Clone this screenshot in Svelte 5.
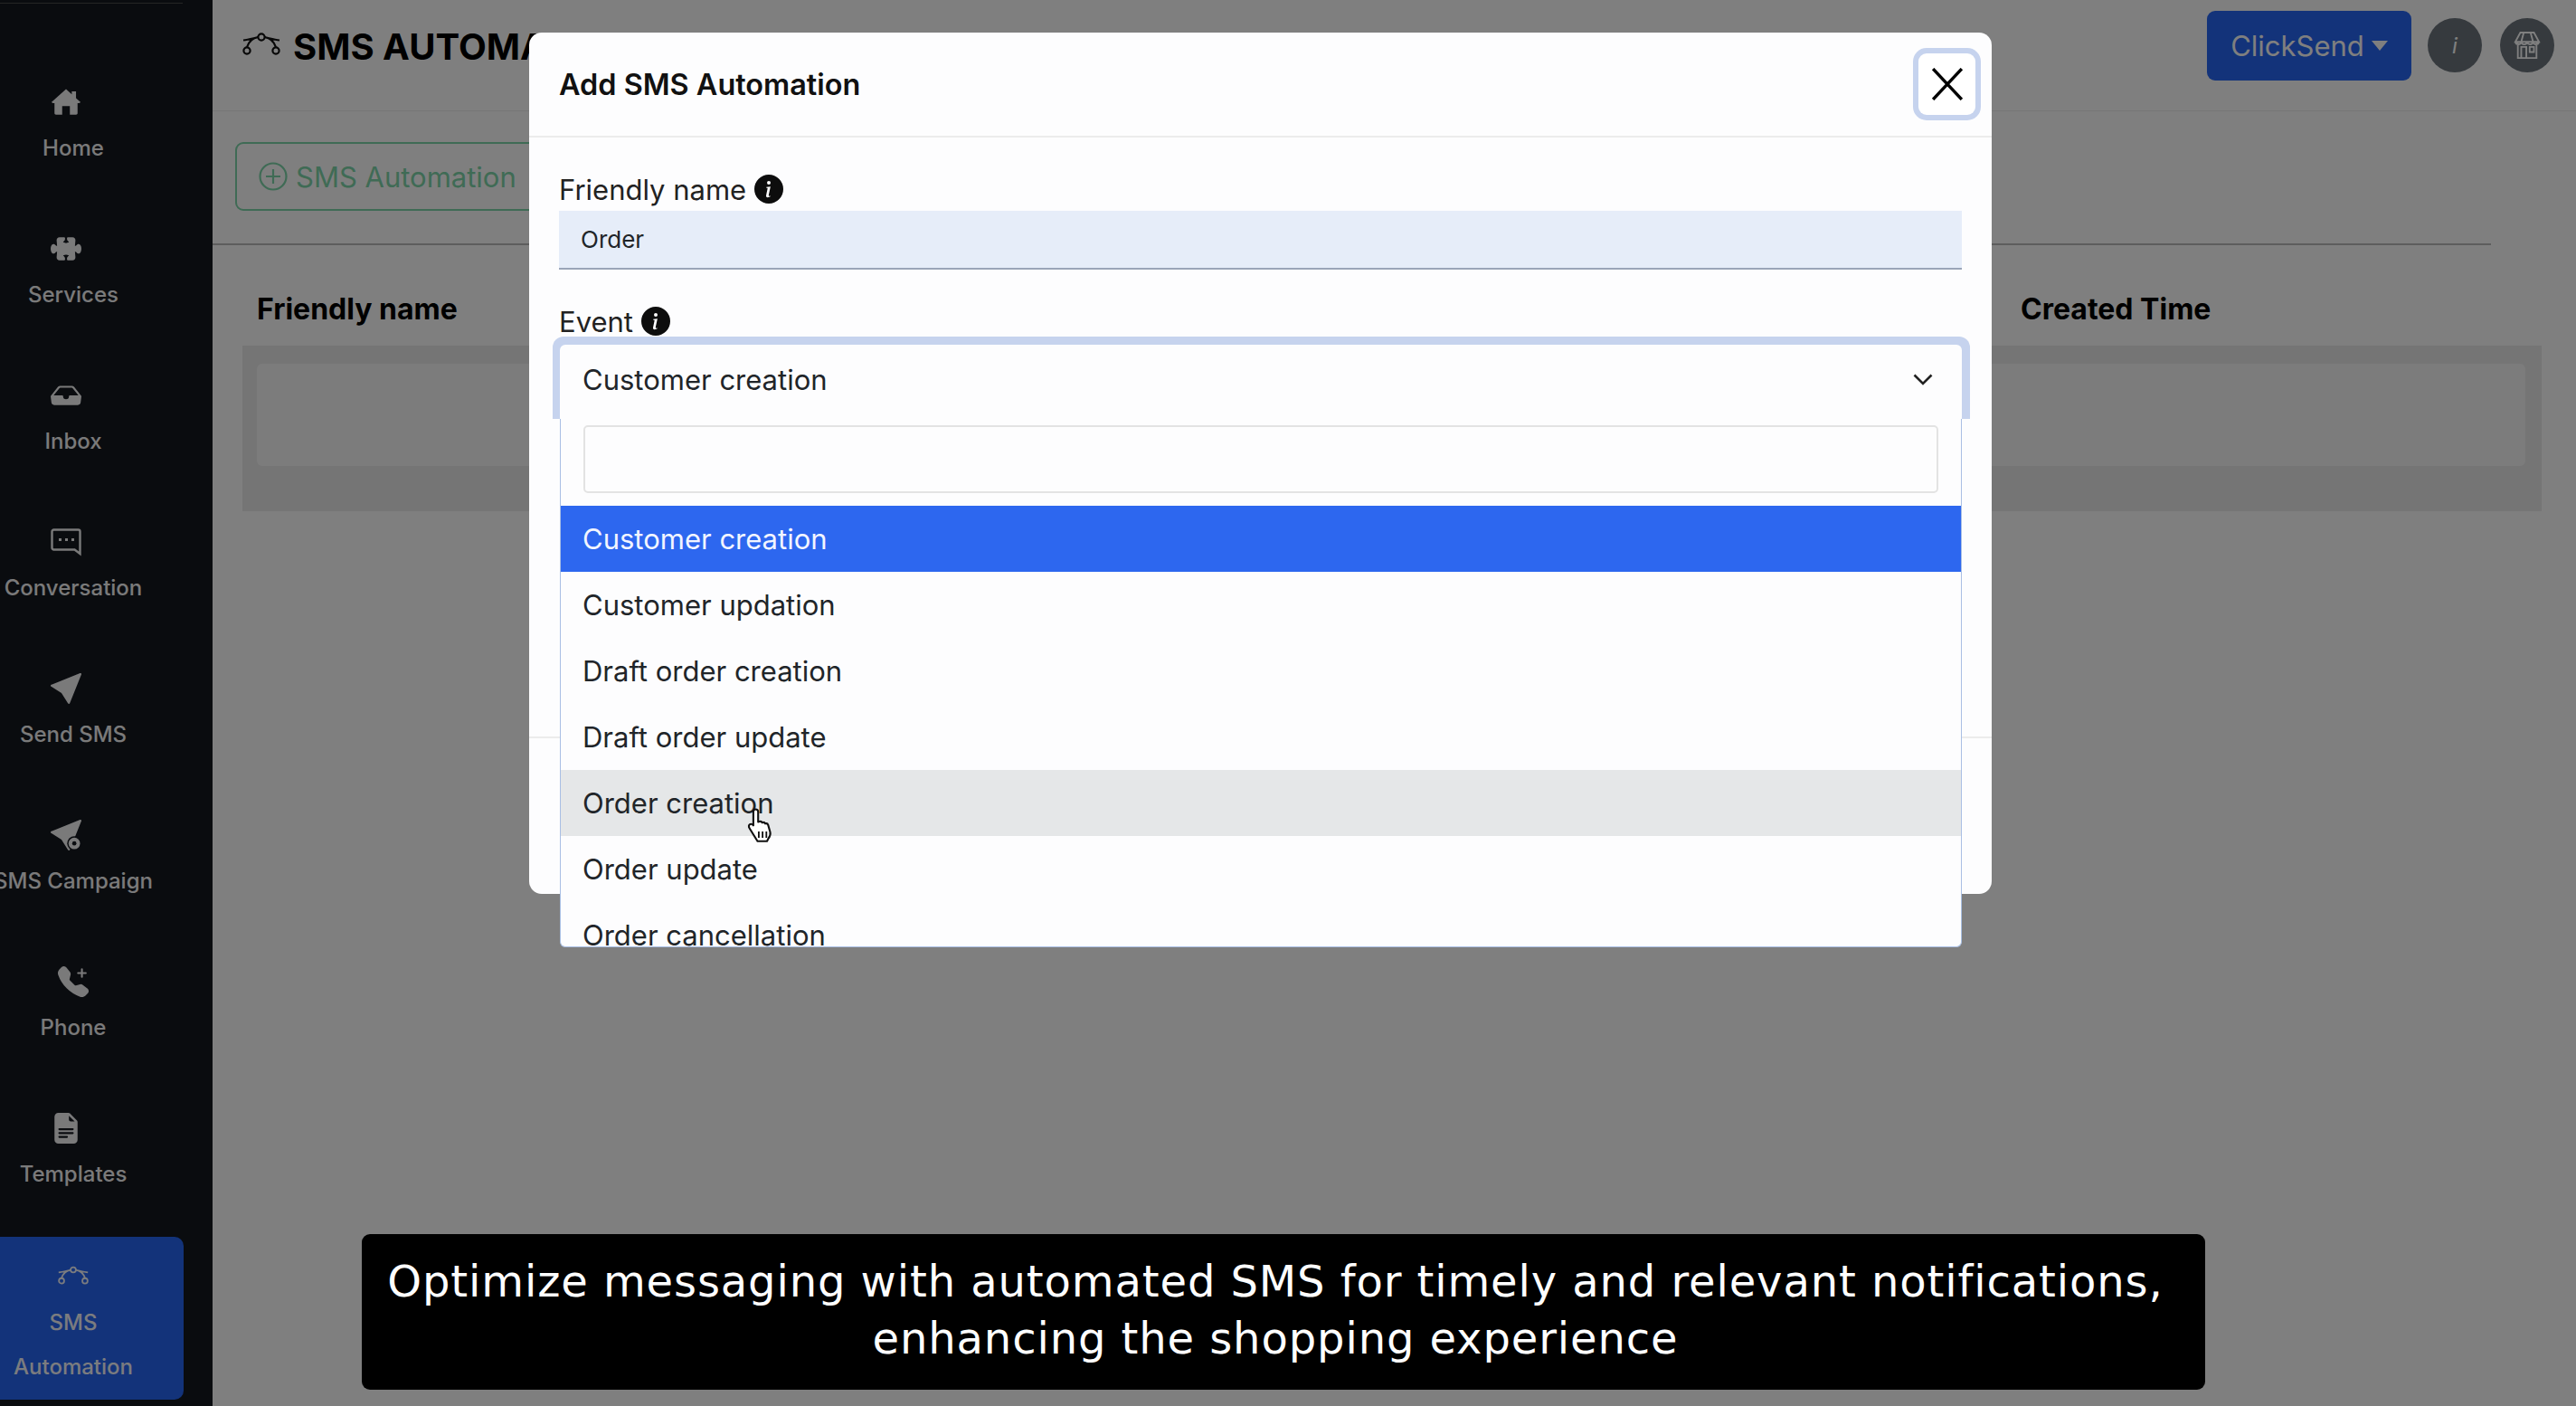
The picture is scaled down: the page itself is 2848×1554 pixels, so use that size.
<script>
  const send = "M15.964.686a.5.5 0 0 0-.65-.65L.767 5.855H.766l-.452.18a.5.5 0 0 0-.082.887l.41.26.001.002 4.995 3.178 3.178 4.995.002.002.26.41a.5.5 0 0 0 .886-.083l6-15Z";
  const nav = [
    { label: 'Home', icon: 'home' },
    { label: 'Services', icon: 'puzzle' },
    { label: 'Inbox', icon: 'inbox' },
    { label: 'Conversation', icon: 'chat' },
    { label: 'Send SMS', icon: 'send' },
    { label: 'SMS Campaign', icon: 'campaign' },
    { label: 'Phone', icon: 'phone' },
    { label: 'Templates', icon: 'file' }
  ];
  const events = [
    'Customer creation',
    'Customer updation',
    'Draft order creation',
    'Draft order update',
    'Order creation',
    'Order update',
    'Order cancellation'
  ];
</script>

{#snippet bezier()}
  <svg viewBox="0 0 42 26" fill="none" stroke="currentColor" stroke-width="2.2">
    <circle cx="5" cy="20" r="3.6" />
    <circle cx="37" cy="20" r="3.6" />
    <circle cx="21" cy="5" r="3.6" />
    <path d="M5 16C7 10 12 6 17.5 5M37 16C35 10 30 6 24.5 5M1 8.5C6 8 11 6.5 17.5 5M41 8.5C36 8 31 6.5 24.5 5" />
  </svg>
{/snippet}

{#snippet info()}
  <svg class="info" viewBox="0 0 16 16" fill="#0d0d0d">
    <path d="M8 16A8 8 0 1 0 8 0a8 8 0 0 0 0 16zm.93-9.412-1 4.705c-.07.34.029.533.304.533.194 0 .487-.07.686-.246l-.088.416c-.287.346-.92.598-1.465.598-.703 0-1.002-.422-.808-1.319l.738-3.468c.064-.293.006-.399-.287-.47l-.451-.081.082-.381 2.29-.287zM8 5.5a1 1 0 1 1 0-2 1 1 0 0 1 0 2z" />
  </svg>
{/snippet}

<div class="page">
  <aside class="sidebar">
    <div class="top-line"></div>
    {#each nav as item}
      <a class="nav-item">
        <span class="nav-icon">
          {#if item.icon === 'home'}
            <svg viewBox="0 0 16 16" fill="currentColor"><path d="M8 1.2 11 3.9V2.4h2.2v3.5L15.6 8l-.8.5H14v5.2c0 .5-.3.8-.8.8H10V10H6v4.5H2.800c-.5 0-.8-.3-.8-.8V8.500h-.8L.4 8z" /></svg>
          {:else if item.icon === 'puzzle'}
            <svg viewBox="0 0 16 16" fill="currentColor"><path d="M3.112 3.645A1.5 1.5 0 0 1 4.605 2H7a.5.5 0 0 1 .5.5v.382c0 .696-.497 1.182-.872 1.469a.459.459 0 0 0-.115.118.113.113 0 0 0-.012.025L6.5 4.5v.003l.003.01c.004.01.014.028.036.053a.86.86 0 0 0 .27.194C7.09 4.9 7.51 5 8 5c.492 0 .912-.1 1.19-.24a.86.86 0 0 0 .271-.194.213.213 0 0 0 .039-.063v-.009a.112.112 0 0 0-.012-.025.459.459 0 0 0-.115-.118c-.375-.287-.872-.773-.872-1.469V2.500A.5.5 0 0 1 9 2h2.395a1.5 1.5 0 0 1 1.493 1.645L12.645 6.5h.237c.195 0 .42-.147.675-.48.21-.274.528-.52.943-.52.568 0 .947.447 1.154.862C15.877 6.807 16 7.387 16 8s-.123 1.193-.346 1.638c-.207.415-.586.862-1.154.862-.415 0-.733-.246-.943-.52-.255-.333-.48-.48-.675-.48h-.237l.243 2.855A1.5 1.5 0 0 1 11.395 14H9a.5.5 0 0 1-.5-.5v-.382c0-.696.497-1.182.872-1.469a.459.459 0 0 0 .115-.118.113.113 0 0 0 .012-.025L9.500 11.500v-.003a.214.214 0 0 0-.039-.064.859.859 0 0 0-.27-.193C8.910 11.100 8.490 11 8 11c-.491 0-.912.1-1.190.24a.859.859 0 0 0-.271.194.214.214 0 0 0-.039.063v.003l.001.006a.113.113 0 0 0 .012.025c.016.027.05.068.115.118.375.287.872.773.872 1.469v.382a.5.5 0 0 1-.5.5H4.605a1.500 1.500 0 0 1-1.493-1.645L3.356 9.500h-.238c-.195 0-.42.147-.675.48-.21.274-.528.52-.943.52-.568 0-.947-.447-1.154-.862C.123 9.193 0 8.613 0 8s.123-1.193.346-1.638C.553 5.947.932 5.500 1.500 5.500c.415 0 .733.246.943.52.255.333.48.48.675.48h.238l-.244-2.855z" /></svg>
          {:else if item.icon === 'inbox'}
            <svg viewBox="0 0 16 16" fill="currentColor"><path d="M4.980 4a.5.5 0 0 0-.39.188L1.540 8H6a.5.5 0 0 1 .5.5 1.500 1.500 0 1 0 3 0A.5.5 0 0 1 10 8h4.460l-3.050-3.812A.5.5 0 0 0 11.020 4H4.980zm-1.170-.437A1.500 1.500 0 0 1 4.980 3h6.040a1.500 1.500 0 0 1 1.170.563l3.700 4.625a.5.5 0 0 1 .106.374l-.39 3.124A1.500 1.500 0 0 1 14.117 13H1.883a1.500 1.500 0 0 1-1.489-1.314l-.39-3.124a.5.5 0 0 1 .106-.374l3.700-4.625z" /></svg>
          {:else if item.icon === 'chat'}
            <svg viewBox="0 0 34 30" fill="none" stroke="currentColor" stroke-width="2.4"><path d="M3.500 1.500h27a2 2 0 0 1 2 2V28l-6-4.500h-23a2 2 0 0 1-2-2v-18a2 2 0 0 1 2-2z" /><path d="M9 12.500h3M16 12.500h3M23 12.500h3" stroke-width="3" /></svg>
          {:else if item.icon === 'send'}
            <svg viewBox="0 0 16 16" fill="currentColor"><path d={send} /></svg>
          {:else if item.icon === 'campaign'}
            <svg viewBox="0 0 16 16" fill="currentColor"><path d={send} /><circle cx="12.300" cy="12.300" r="3.700" fill="#14181f" /><circle cx="12.300" cy="12.300" r="3" /><circle cx="12.300" cy="12.300" r="1.100" fill="#14181f" /></svg>
          {:else if item.icon === 'phone'}
            <svg class="shift" viewBox="0 0 16 16" fill="currentColor"><path d="M1.885.511a1.745 1.745 0 0 1 2.610.163L6.290 2.980c.329.423.445.974.315 1.494l-.547 2.190a.678.678 0 0 0 .178.643l2.457 2.457a.678.678 0 0 0 .644.178l2.189-.547a1.745 1.745 0 0 1 1.494.315l2.306 1.794c.829.645.905 1.870.163 2.611l-1.034 1.034c-.74.74-1.846 1.065-2.877.702a18.634 18.634 0 0 1-7.010-4.420 18.634 18.634 0 0 1-4.420-7.009c-.362-1.030-.037-2.137.703-2.877L1.885.511z" /><path d="M12.500 1a.5.5 0 0 1 .5.5V3h1.500a.5.5 0 0 1 0 1H13v1.500a.5.5 0 0 1-1 0V4h-1.500a.5.5 0 0 1 0-1H12V1.500a.5.5 0 0 1 .5-.5z" /></svg>
          {:else if item.icon === 'file'}
            <svg viewBox="0 0 16 16" fill="currentColor"><path d="M9.293 0H4a2 2 0 0 0-2 2v12a2 2 0 0 0 2 2h8a2 2 0 0 0 2-2V4.707A1 1 0 0 0 13.707 4L10 .293A1 1 0 0 0 9.293 0zM9.500 3.500v-2l3 3h-2a1 1 0 0 1-1-1zM4.500 9a.5.5 0 0 1 0-1h7a.5.5 0 0 1 0 1h-7zM4 10.500a.5.5 0 0 1 .5-.5h7a.5.5 0 0 1 0 1h-7a.5.5 0 0 1-.5-.5zm.5 2.500a.5.5 0 0 1 0-1h4a.5.5 0 0 1 0 1h-4z" /></svg>
          {/if}
        </span>
        <span class="nav-label">{item.label}</span>
      </a>
    {/each}
    <a class="nav-item active">
      <span class="nav-icon bezier">{@render bezier()}</span>
      <span class="nav-label">SMS</span>
      <span class="nav-label">Automation</span>
    </a>
  </aside>

  <main class="content">
    <header class="topbar">
      <div class="title-icon">{@render bezier()}</div>
      <h1>SMS AUTOMATION</h1>
      <div class="top-actions">
        <button class="account">ClickSend<span class="caret"></span></button>
        <span class="round"><i>i</i></span>
        <span class="round">
          <svg viewBox="0 0 32 34" fill="none" stroke="currentColor" stroke-width="2"><path d="M8 2h16l6 11H2zM5 13v19h22V13M9 19h6v13H9zM19 19h5v6h-5zM2 13c1 4 6 4 7 0 1 4 6 4 7 0 1 4 6 4 7 0 1 4 6 4 7 0M12 2l-3 11M20 2l3 11" /></svg>
        </span>
      </div>
    </header>

    <div class="toolbar">
      <button class="add">
        <svg viewBox="0 0 32 32" fill="none" stroke="currentColor" stroke-width="2.200"><circle cx="16" cy="16" r="14.500" /><path d="M16 8v16M8 16h16" /></svg>
        SMS Automation
      </button>
    </div>

    <section class="table">
      <div class="table-head">
        <span>Friendly name</span>
        <span class="created">Created Time</span>
      </div>
      <div class="table-body"><div class="table-row"></div></div>
    </section>
  </main>

  <div class="backdrop"></div>

  <div class="modal">
    <div class="modal-head">
      <h2>Add SMS Automation</h2>
      <button class="close" aria-label="Close">
        <svg viewBox="0 0 34 34" fill="none" stroke="#000" stroke-width="3.200"><path d="M2 1l30 32M32 1 2 33" /></svg>
      </button>
    </div>
    <div class="modal-body">
      <label class="field-label">Friendly name {@render info()}</label>
      <div class="text-input">Order</div>
      <label class="field-label event">Event {@render info()}</label>
      <div class="select">
        <span>Customer creation</span>
        <svg class="chevron" viewBox="0 0 22 13" fill="none" stroke="#222" stroke-width="2.600"><path d="M1.500 1.500 11 11l9.500-9.500" /></svg>
        <div class="dropdown">
          <div class="search-wrap"><div class="search"></div></div>
          <ul>
            {#each events as ev, i}
              <li class:selected={i === 0} class:hover={i === 4}>{ev}</li>
            {/each}
          </ul>
          <svg class="cursor" viewBox="0 0 24 30">
            <path d="M8 2.500c1.300 0 2 .8 2 2v8l1-.3c1-.3 1.800 0 2.200.8 1-.4 2-.1 2.400.8 1-.3 2 .2 2.300 1.100l1.600 5.600c.5 2-.2 3.500-1.500 5.200l-1 2H9.500L3.200 17.500c-.9-1.300-.6-2.500.3-3.100.9-.6 2 0 2.700.8V4.500c0-1.200.6-2 1.800-2z" fill="#fff" stroke="#111" stroke-width="1.500" stroke-linejoin="round" />
            <path d="M10.500 20v5M13.500 20v5M16.500 20v5" stroke="#111" stroke-width="1.300" />
          </svg>
        </div>
      </div>
    </div>
    <div class="modal-foot"></div>
  </div>

  <div class="caption">
    Optimize messaging with automated SMS for timely and relevant notifications,<br />
    enhancing the shopping experience
  </div>
</div>

<style>
  :global(body) {
    margin: 0;
    background: #fff;
  }

  .page {
    position: relative;
    display: flex;
    width: 2848px;
    height: 1554px;
    overflow: hidden;
    font-family: Inter, "Liberation Sans", sans-serif;
    color: #212529;
    background: #fff;
  }

  button {
    font-family: inherit;
  }

  .sidebar {
    position: relative;
    flex: 0 0 235px;
    display: flex;
    flex-direction: column;
    background: #14181f;
    padding-top: 96px;
    box-sizing: border-box;
  }

  .top-line {
    position: absolute;
    top: 3px;
    left: 0;
    width: 202px;
    height: 1px;
    background: #4a4a4a;
  }

  .nav-item {
    display: flex;
    flex-direction: column;
    align-items: center;
    width: 162px;
    height: 162px;
    flex: none;
    color: #f4f4f4;
  }

  .nav-icon {
    display: flex;
    justify-content: center;
    width: 34px;
    height: 34px;
    margin-right: 16px;
    margin-bottom: 19px;
  }

  .nav-icon svg {
    width: 34px;
    height: 34px;
  }

  .nav-icon .shift {
    transform: translateX(8px);
  }

  .nav-label {
    font-size: 24px;
    line-height: 30px;
    font-weight: 500;
    white-space: nowrap;
  }

  .nav-item.active {
    width: 203px;
    height: 180px;
    margin-top: -25px;
    padding-top: 30px;
    padding-right: 41px;
    box-sizing: border-box;
    background: #2666f4;
    border-radius: 0 10px 10px 0;
    color: #f6f8ff;
  }

  .nav-item.active .nav-label {
    line-height: 49px;
  }

  .nav-item.active .nav-icon {
    margin: 0 0 10px;
    height: 30px;
  }

  .nav-item.active .nav-icon svg {
    height: 26px;
  }

  .content {
    flex: 1;
    min-width: 0;
  }

  .topbar {
    display: flex;
    align-items: center;
    height: 122px;
    padding: 0 24px 0 33px;
    border-bottom: 1px solid #ececec;
    box-sizing: content-box;
  }

  .title-icon {
    width: 42px;
    height: 26px;
    margin-right: 14px;
    margin-top: -24px;
    color: #111;
  }

  .title-icon svg {
    display: block;
  }

  h1 {
    margin: -20px 0 0;
    font-size: 40px;
    font-weight: 700;
    color: #000;
    white-space: nowrap;
  }

  .top-actions {
    display: flex;
    align-items: center;
    gap: 20px;
    margin-left: auto;
    margin-top: -22px;
  }

  .account {
    width: 226px;
    height: 77px;
    margin-right: -2px;
    border: none;
    border-radius: 9px;
    background: #2666f4;
    color: #fff;
    font-size: 31px;
  }

  .caret {
    display: inline-block;
    margin-left: 8px;
    vertical-align: 6px;
    border-top: 11px solid #fff;
    border-left: 9px solid transparent;
    border-right: 9px solid transparent;
  }

  .round {
    display: flex;
    align-items: center;
    justify-content: center;
    width: 60px;
    height: 60px;
    border-radius: 50%;
    background: #6c757d;
    color: #fff;
    font-size: 24px;
  }

  .round svg {
    width: 30px;
    height: 32px;
  }

  .toolbar {
    padding: 34px 25px 36px;
    margin-right: 94px;
    border-bottom: 2px solid #bbb;
  }

  .add {
    display: flex;
    align-items: center;
    gap: 9px;
    height: 76px;
    width: 500px;
    padding: 0 24px;
    border: 2px solid #7ed6aa;
    border-radius: 9px;
    background: transparent;
    color: #7ed6aa;
    font-size: 31px;
    box-sizing: border-box;
  }

  .add svg {
    width: 32px;
    height: 32px;
  }

  .table {
    padding: 0 38px 0 33px;
  }

  .table-head {
    display: flex;
    align-items: center;
    height: 111px;
    padding: 29px 0 0 16px;
    box-sizing: border-box;
    font-size: 32px;
    font-weight: 700;
    color: #000;
  }

  .created {
    margin-left: auto;
    width: 576px;
  }

  .table-body {
    padding: 20px 18px 50px 16px;
    background: #ebebeb;
  }

  .table-row {
    height: 113px;
    border-radius: 6px;
    background: #f8f8f8;
  }

  .backdrop {
    position: absolute;
    inset: 0;
    background: rgba(0, 0, 0, 0.5);
  }

  .modal {
    position: absolute;
    z-index: 1;
    top: 36px;
    left: 585px;
    width: 1617px;
    height: 952px;
    display: flex;
    flex-direction: column;
    border-radius: 14px;
    background: #fdfdfe;
  }

  .modal-head {
    display: flex;
    align-items: center;
    justify-content: space-between;
    flex: none;
    height: 114px;
    padding: 0 18px 0 33px;
    border-bottom: 2px solid #ececec;
  }

  h2 {
    margin: 0;
    font-size: 32.400px;
    font-weight: 600;
    color: #111;
  }

  .close {
    display: flex;
    align-items: center;
    justify-content: center;
    width: 63px;
    height: 68px;
    padding: 0;
    border: none;
    border-radius: 9px;
    background: #fff;
    box-shadow: 0 0 0 6px #c6d3ee;
  }

  .close svg {
    width: 36px;
    height: 36px;
  }

  .modal-body {
    position: relative;
    flex: 1;
    padding: 41px 33px 0;
  }

  .field-label {
    display: flex;
    align-items: center;
    gap: 9px;
    height: 32px;
    font-size: 31px;
    color: #222;
  }

  .field-label.event {
    margin-top: 41px;
  }

  .info {
    width: 32px;
    height: 32px;
  }

  .text-input {
    display: flex;
    align-items: center;
    height: 65px;
    margin-top: 8px;
    padding-left: 24px;
    box-sizing: border-box;
    background: #e6edf9;
    border-bottom: 2px solid #9aa5b8;
    font-size: 26px;
    color: #212529;
  }

  .select {
    position: relative;
    display: flex;
    align-items: center;
    justify-content: space-between;
    height: 82px;
    margin: 10px 0 0 1px;
    padding: 0 32px 6px 25px;
    box-sizing: border-box;
    border-radius: 6px 6px 0 0;
    background: #fdfdfe;
    font-size: 31px;
    color: #212529;
  }

  /* focus ring, it stops where the open list starts */
  .select::before {
    content: "";
    position: absolute;
    z-index: -1;
    inset: -9px -9px 0 -8px;
    border-radius: 12px 12px 0 0;
    background: #c6d3ee;
  }

  .chevron {
    width: 22px;
    height: 13px;
  }

  .dropdown {
    position: absolute;
    top: 82px;
    left: 0;
    right: 0;
    height: 584px;
    overflow: hidden;
    box-sizing: border-box;
    background: #fdfdfe;
    border: 1px solid #a9bfe4;
    border-top: none;
    border-radius: 0 0 6px 6px;
  }

  .search-wrap {
    padding: 7px 25px 14px;
  }

  .search {
    height: 75px;
    box-sizing: border-box;
    border: 2px solid #e3e3e3;
    border-radius: 5px;
  }

  ul {
    margin: 0;
    padding: 0;
    list-style: none;
  }

  li {
    display: flex;
    align-items: center;
    height: 73px;
    padding-left: 24px;
    color: #212529;
  }

  li.selected {
    background: #2d67ef;
    color: #f2f5ff;
  }

  li.hover {
    background: #e5e7e8;
  }

  .cursor {
    position: absolute;
    top: 428px;
    left: 204px;
    width: 34px;
    height: 42px;
  }

  .modal-foot {
    flex: none;
    height: 174px;
    border-top: 2px solid #ececec;
    box-sizing: border-box;
  }

  .caption {
    position: absolute;
    z-index: 2;
    top: 1364px;
    left: 400px;
    width: 2038px;
    height: 172px;
    box-sizing: border-box;
    padding: 21px 18px 0 0;
    border-radius: 9px;
    background: #000;
    color: #fff;
    text-align: center;
    font-family: "DejaVu Sans", sans-serif;
    font-size: 48px;
    line-height: 63px;
    letter-spacing: 0.9px;
    white-space: nowrap;
  }
</style>
